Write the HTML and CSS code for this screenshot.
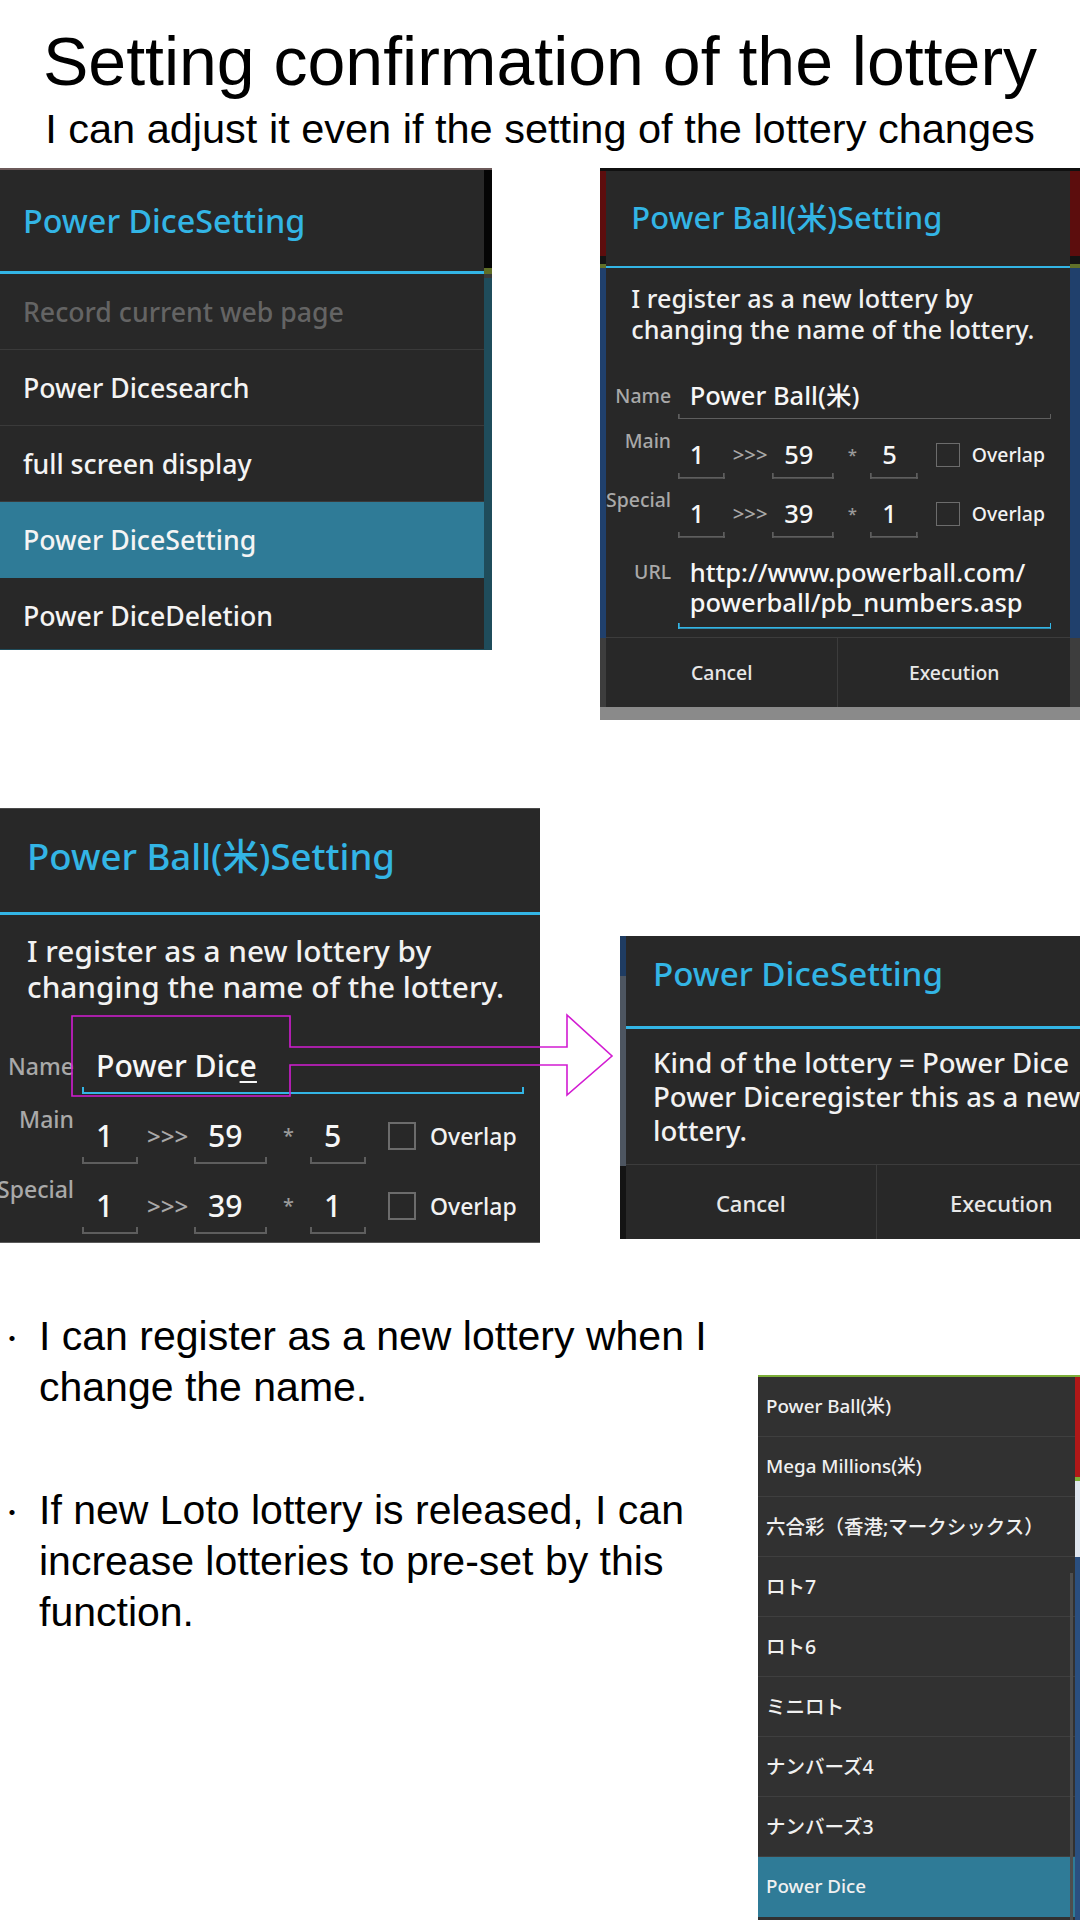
FILE: index.html
```html
<!DOCTYPE html>
<html lang="en">
<head>
<meta charset="utf-8">
<title>Setting confirmation of the lottery</title>
<link rel="stylesheet" href="styles.css">
</head>
<body>
<header class="hero">
  <h1 class="hero-title">Setting confirmation of the lottery</h1>
  <p class="hero-sub">I can adjust it even if the setting of the lottery changes</p>
</header>

<section class="row row1">
  <div class="shot shot1">
    <div class="menu">
      <div class="menu-head"><span class="menu-title">Power DiceSetting</span></div>
      <div class="mi mi-dis">Record current web page</div>
      <div class="mi">Power Dicesearch</div>
      <div class="mi">full screen display</div>
      <div class="mi mi-sel">Power DiceSetting</div>
      <div class="mi">Power DiceDeletion</div>
    </div>
  </div>

  <div class="shot shot2">
    <div class="dlg dlg-small">
      <div class="dlg-head"><span class="dlg-title">Power Ball(米)Setting</span></div>
      <div class="dlg-msg">I register as a new lottery by<br>changing the name of the lottery.</div>
      <div class="form">
        <div class="frow frow-name">
          <span class="flabel">Name</span>
          <div class="field f-wide">Power Ball(米)</div>
        </div>
        <div class="frow">
          <span class="flabel">Main</span>
          <div class="field f-sm">1</div>
          <span class="sep">&gt;&gt;&gt;</span>
          <div class="field f-md">59</div>
          <span class="star">*</span>
          <div class="field f-sm">5</div>
          <span class="chk"></span>
          <span class="chk-label">Overlap</span>
        </div>
        <div class="frow">
          <span class="flabel">Special</span>
          <div class="field f-sm">1</div>
          <span class="sep">&gt;&gt;&gt;</span>
          <div class="field f-md">39</div>
          <span class="star">*</span>
          <div class="field f-sm">1</div>
          <span class="chk"></span>
          <span class="chk-label">Overlap</span>
        </div>
        <div class="frow frow-url">
          <span class="flabel">URL</span>
          <div class="field f-wide f-url focus">http://www.powerball.com/<br>powerball/pb_numbers.asp</div>
        </div>
      </div>
      <div class="btns">
        <div class="btn">Cancel</div>
        <div class="btn">Execution</div>
      </div>
    </div>
  </div>
</section>

<section class="row row2">
  <div class="shot shot3">
    <div class="dlg">
      <div class="dlg-head"><span class="dlg-title">Power Ball(米)Setting</span></div>
      <div class="dlg-msg">I register as a new lottery by<br>changing the name of the lottery.</div>
      <div class="form">
        <div class="frow frow-name">
          <span class="flabel">Name</span>
          <div class="field f-wide focus">Power Dic<span class="compose">e</span></div>
        </div>
        <div class="frow">
          <span class="flabel">Main</span>
          <div class="field f-sm">1</div>
          <span class="sep">&gt;&gt;&gt;</span>
          <div class="field f-md">59</div>
          <span class="star">*</span>
          <div class="field f-sm">5</div>
          <span class="chk"></span>
          <span class="chk-label">Overlap</span>
        </div>
        <div class="frow">
          <span class="flabel">Special</span>
          <div class="field f-sm">1</div>
          <span class="sep">&gt;&gt;&gt;</span>
          <div class="field f-md">39</div>
          <span class="star">*</span>
          <div class="field f-sm">1</div>
          <span class="chk"></span>
          <span class="chk-label">Overlap</span>
        </div>
      </div>
    </div>
  </div>

  <div class="shot shot4">
    <div class="dlg4">
      <div class="dlg4-head"><span class="dlg4-title">Power DiceSetting</span></div>
      <div class="dlg4-msg">Kind of the lottery = Power Dice<br>Power Diceregister this as a new<br>lottery.</div>
      <div class="btns btns4">
        <div class="btn">Cancel</div>
        <div class="btn">Execution</div>
      </div>
    </div>
  </div>

  <svg class="callout" width="620" height="300" viewBox="0 0 620 300" aria-hidden="true">
    <path d="M72 208 H290 V239 H567 V207 L612 248 L567 287 V257 H290 V288 H72 Z" fill="none" stroke="#d21cd2" stroke-width="1.6" stroke-linejoin="miter"/>
  </svg>
</section>

<section class="row row3">
  <div class="notes">
    <div class="note"><span class="dot">・</span><p class="note-text">I can register as a new lottery when I<br>change the name.</p></div>
    <div class="note"><span class="dot">・</span><p class="note-text">If new Loto lottery is released, I can<br>increase lotteries to pre-set by this<br>function.</p></div>
  </div>

  <div class="shot shot5">
    <div class="list">
      <div class="li">Power Ball(米)</div>
      <div class="li">Mega Millions(米)</div>
      <div class="li li-jp">六合彩（香港;マークシックス）</div>
      <div class="li li-jp">ロト7</div>
      <div class="li li-jp">ロト6</div>
      <div class="li li-jp">ミニロト</div>
      <div class="li li-jp">ナンバーズ4</div>
      <div class="li li-jp">ナンバーズ3</div>
      <div class="li li-sel">Power Dice</div>
    </div>
    <span class="scrollbar"></span>
  </div>
</section>
</body>
</html>
```

FILE: styles.css
```css
html, body {
  margin: 0;
  padding: 0;
  width: 1080px;
  height: 1920px;
  overflow: hidden;
  background: #ffffff;
}

body {
  font-family: "Liberation Sans", Arial, sans-serif;
  color: #000;
}

/* ---------- header ---------- */
.hero {
  height: 168px;
  box-sizing: border-box;
  padding-top: 21px;
  text-align: center;
}
.hero-title {
  margin: 0;
  font-size: 68px;
  line-height: 80px;
  font-weight: normal;
  white-space: nowrap;
}
.hero-sub {
  margin: 3px 0 0;
  font-size: 41.5px;
  line-height: 50px;
  white-space: nowrap;
}

/* ---------- rows ---------- */
.row {
  display: flex;
  align-items: flex-start;
}
.row1 {
  justify-content: space-between;
  height: 552px;
}
.row2 {
  position: relative;
  margin-top: 88px;
  height: 435px;
}
.row3 {
  justify-content: space-between;
}

.shot {
  flex: none;
  box-sizing: border-box;
  overflow: hidden;
}

/* ---------- shot 1 : option menu ---------- */
.shot1 {
  width: 492px;
  height: 482px;
  padding-top: 2px;
  background: linear-gradient(to bottom, #6c5a5a 0 2px, #050505 2px 100px, #5f6e27 100px 106px, #3a3a3a 106px 110px, #1f4c5b 110px 100%);
}
.menu {
  width: 484px;
  height: 479px;
  background: #282828;
  overflow: hidden;
  font-family: "Noto Sans", "Noto Sans CJK JP", sans-serif;
  font-weight: 500;
}
.menu-head {
  height: 104px;
  box-sizing: border-box;
  padding: 30px 0 0 23px;
  border-bottom: 3px solid #33b5e5;
}
.menu-title {
  font-size: 32.3px;
  line-height: 40px;
  color: #33b5e5;
  white-space: nowrap;
}
.mi {
  height: 75px;
  border-bottom: 1px solid #3a3a3a;
  padding-left: 23px;
  font-size: 26.7px;
  line-height: 75px;
  color: #f4f4f4;
  white-space: nowrap;
}
.mi-dis { color: #646464; }
.mi-sel {
  background: #2f7b97;
  border-bottom-color: #2f7b97;
}

/* ---------- setting dialog (drawn at the scale of shot 3) ---------- */
.dlg {
  width: 549px;
  background: #282828;
  font-family: "Noto Sans", "Noto Sans CJK JP", sans-serif;
  font-weight: 500;
  color: #f2f2f2;
}
.dlg-head {
  height: 115px;
  box-sizing: border-box;
  padding: 36px 0 0 30px;
  border-bottom: 3px solid #33b5e5;
}
.dlg-title {
  font-size: 36.6px;
  line-height: 40px;
  color: #33b5e5;
  white-space: nowrap;
}
.dlg-msg {
  padding: 18px 30px 0;
  font-size: 29.8px;
  line-height: 36px;
  white-space: nowrap;
}
.form {
  margin-top: 30px;
}
.frow {
  display: flex;
  align-items: flex-start;
}
.flabel {
  flex: none;
  width: 77px;
  margin: 5px 8px 0 0;
  text-align: right;
  font-size: 23px;
  line-height: 40px;
  color: #a9a9a9;
  white-space: nowrap;
}
.frow-name .flabel { margin-top: 11px; }
.frow-url .flabel { margin-top: 21px; }

.field {
  --ul: #5e5e5e;
  flex: none;
  box-sizing: border-box;
  height: 70px;
  padding: 22px 0 0 14px;
  font-size: 30.2px;
  line-height: 40px;
  color: #f7f7f7;
  white-space: nowrap;
  background:
    linear-gradient(var(--ul), var(--ul)) left bottom / 100% 2px no-repeat,
    linear-gradient(var(--ul), var(--ul)) left bottom / 2px 7px no-repeat,
    linear-gradient(var(--ul), var(--ul)) right bottom / 2px 7px no-repeat;
}
.field.focus { --ul: #33b5e5; }
.frow-name .field {
  height: 59px;
  padding-top: 11px;
}
.f-wide { width: 442px; }
.f-sm { width: 56px; }
.f-md { width: 73px; }
.f-url {
  height: auto;
  padding: 24px 0 14px 14px;
  line-height: 35px;
}
.compose {
  text-decoration: underline;
  text-decoration-thickness: 2px;
  text-underline-offset: 4px;
}
.sep {
  flex: none;
  width: 38px;
  margin: 0 9px;
  padding-top: 22px;
  text-align: center;
  font-size: 24px;
  line-height: 40px;
  color: #a9a9a9;
  white-space: nowrap;
}
.star {
  flex: none;
  width: 43px;
  padding-top: 22px;
  text-align: center;
  font-size: 20px;
  line-height: 40px;
  color: #9a9a9a;
}
.chk {
  flex: none;
  box-sizing: border-box;
  width: 28px;
  height: 28px;
  margin: 28px 0 0 22px;
  border: 2px solid #6c6c6c;
}
.chk-label {
  flex: none;
  margin-left: 14px;
  padding-top: 22px;
  font-size: 23px;
  line-height: 40px;
  color: #f2f2f2;
  white-space: nowrap;
}
.btns {
  display: flex;
  height: 82px;
  margin-top: 9px;
  border-top: 1px solid #3c3c3c;
}
.btn {
  flex: 1;
  display: flex;
  align-items: center;
  justify-content: center;
  font-size: 23px;
  color: #e8e8e8;
}
.btn + .btn { border-left: 1px solid #3c3c3c; }

/* ---------- shot 2 : full dialog, scaled down ---------- */
.shot2 {
  width: 480px;
  height: 552px;
  padding: 3px 0 0 6px;
  background: linear-gradient(to bottom, #101010 0 3px, #5c0d0d 3px 88px, #141414 88px 96px, #60702a 96px 100px, #20406c 100px 470px, #3d3d3d 470px 539px, #8a8a8a 539px 100%);
}
.dlg-small {
  zoom: 0.845;
}

/* ---------- shot 3 : cropped dialog with the new name ---------- */
.shot3 {
  width: 540px;
  height: 435px;
  background: #282828;
  border-top: 1px solid #4a4a4a;
  border-bottom: 1px solid #5a5a5a;
}
.shot3 .dlg {
  margin: -9px 0 0 -3px;
}

/* ---------- shot 4 : confirmation dialog ---------- */
.shot4 {
  width: 460px;
  height: 303px;
  margin: 128px 0 0 auto;
  padding-left: 6px;
  background: linear-gradient(to bottom, #1f3c62 0 40px, #4d5560 40px 230px, #141414 230px 100%);
}
.dlg4 {
  width: 500px;
  height: 303px;
  background: #282828;
  font-family: "Noto Sans", "Noto Sans CJK JP", sans-serif;
  font-weight: 500;
  color: #f2f2f2;
}
.dlg4-head {
  height: 93px;
  box-sizing: border-box;
  padding: 18px 0 0 27px;
  border-bottom: 3px solid #33b5e5;
}
.dlg4-title {
  font-size: 33.2px;
  line-height: 40px;
  color: #33b5e5;
  white-space: nowrap;
}
.dlg4-msg {
  padding: 16px 0 0 27px;
  font-size: 27.6px;
  line-height: 34px;
  white-space: nowrap;
}
.btns4 {
  height: 75px;
  margin-top: 17px;
}
.btns4 .btn { font-size: 22px; }

/* ---------- callout arrow ---------- */
.callout {
  position: absolute;
  left: 0;
  top: 0;
  pointer-events: none;
}

/* ---------- notes ---------- */
.notes {
  margin-top: 68px;
  font-size: 41px;
  line-height: 51px;
}
.note {
  display: flex;
  align-items: flex-start;
}
.note + .note { margin-top: 72px; }
.dot {
  flex: none;
  width: 39px;
  font-family: "Noto Sans CJK JP", sans-serif;
  font-size: 24px;
  line-height: 51px;
}
.note-text {
  margin: 0;
  white-space: nowrap;
}

/* ---------- shot 5 : lottery list ---------- */
.shot5 {
  position: relative;
  width: 322px;
  height: 545px;
  margin-top: 132px;
  border-top: 2px solid #7cae38;
  background: linear-gradient(to bottom, #b01818 0 100px, #7cae38 100px 104px, #dfe6ef 104px 180px, #2a4f80 180px 100%);
}
.list {
  width: 317px;
  height: 100%;
  background: #313131;
  font-family: "Noto Sans", "Noto Sans CJK JP", sans-serif;
  font-weight: 500;
}
.li {
  height: 59px;
  border-bottom: 1px solid #3f3f3f;
  padding-left: 8px;
  font-size: 18.8px;
  line-height: 59px;
  color: #f0f0f0;
  white-space: nowrap;
}
.li-jp {
  font-size: 19.5px;
}
.li-sel {
  background: #2f7b97;
  border-bottom-color: #2f7b97;
}
.scrollbar {
  position: absolute;
  right: 7px;
  top: 196px;
  bottom: 0;
  width: 3px;
  background: #4e4e4e;
}
```
